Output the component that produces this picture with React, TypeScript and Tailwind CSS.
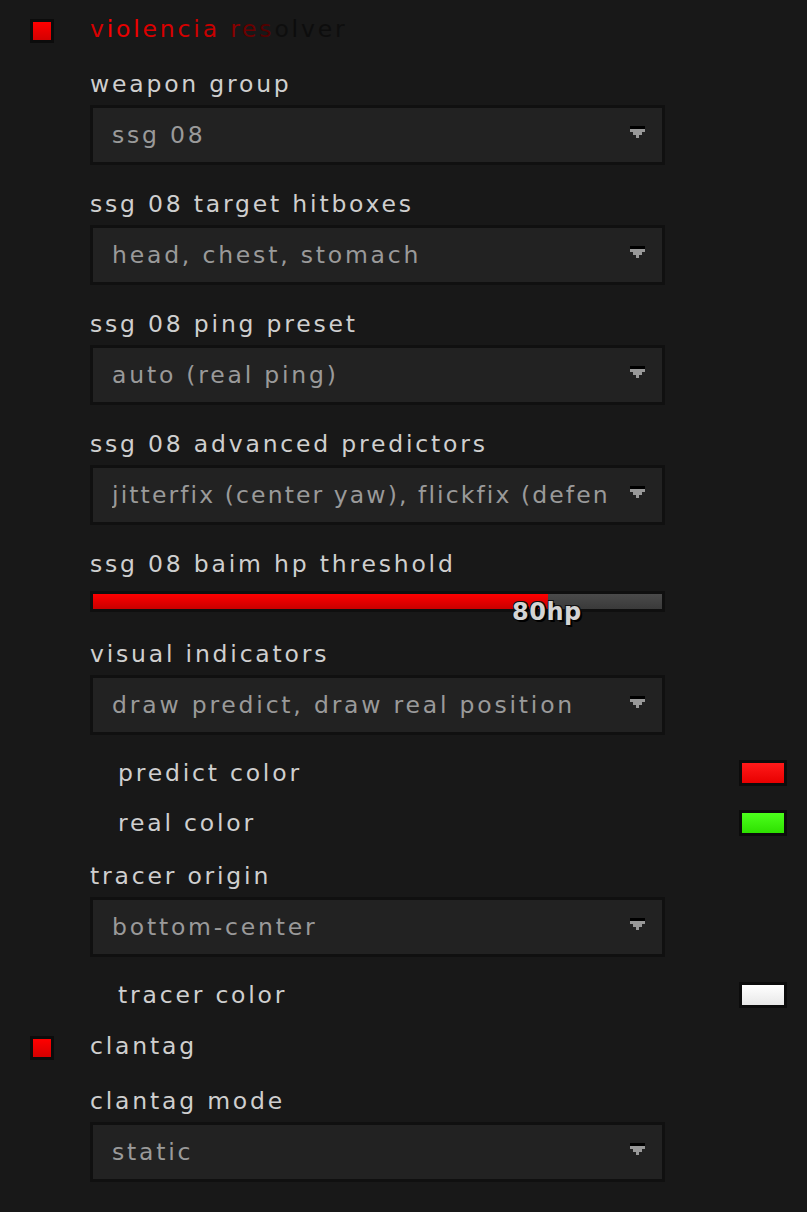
import React from 'react'

const font = { fontFamily: '"DejaVu Sans", Verdana, sans-serif' }

const titleChars: [string, string][] = [
  ['v', '#d80000'], ['i', '#ff0000'], ['o', '#e80000'], ['l', '#f00000'], ['e', '#dc0000'],
  ['n', '#d80000'], ['c', '#d40000'], ['i', '#cc0000'], ['a', '#c80000'], [' ', '#000'],
  ['r', '#880000'], ['e', '#6a0000'], ['s', '#520000'], ['o', '#0e0e0e'], ['l', '#0c0c0c'],
  ['v', '#0d0d0d'], ['e', '#0d0d0d'], ['r', '#0e0e0e'],
]

function Checkbox() {
  return (
    <div className="w-6 h-6 bg-[#0c0c0c] p-[3px]">
      <div className="w-full h-full bg-gradient-to-b from-[#ff0000] to-[#d40000]" />
    </div>
  )
}

function Label({ children, className = '' }: { children: React.ReactNode; className?: string }) {
  return (
    <div className={`h-[44px] flex items-center pt-[3px] text-[23.5px] tracking-[2.8px] text-[#cfcfcf] ${className}`}>
      {children}
    </div>
  )
}

function Arrow() {
  return (
    <div className="flex flex-col items-center">
      <div className="w-[15px] h-[3px] bg-black" />
      <div className="w-[15px] h-[3px] bg-[#999]" />
      <div className="w-[9px] h-[3px] bg-[#999]" />
      <div className="w-[3px] h-[3px] bg-[#999]" />
    </div>
  )
}

function Dropdown({ value, tight = false }: { value: string; tight?: boolean }) {
  return (
    <div className="w-[575px] h-[60px] border-[3px] border-[#101010] bg-[#222222] flex items-center pl-[19px] pr-[17px]">
      <span
        className={`flex-1 whitespace-nowrap overflow-hidden text-[23.5px] text-[#9a9a9a] pt-[1px] ${
          tight ? 'tracking-[2.1px]' : 'tracking-[2.8px]'
        }`}
      >
        {value}
      </span>
      <div className="ml-3 -mt-[6px]">
        <Arrow />
      </div>
    </div>
  )
}

function Swatch({ from, to }: { from: string; to: string }) {
  return (
    <div className="w-[48px] h-[26px] bg-[#0c0c0c] p-[3px]">
      <div className="w-full h-full" style={{ background: `linear-gradient(${from}, ${to})` }} />
    </div>
  )
}

function ColorRow({ label, from, to }: { label: string; from: string; to: string }) {
  return (
    <div className="h-[50px] flex items-center justify-between pl-[118px] pr-[20px]">
      <span className="text-[23.5px] tracking-[2.8px] text-[#cfcfcf] pt-[1px]">{label}</span>
      <Swatch from={from} to={to} />
    </div>
  )
}

export default function App() {
  return (
    <div className="w-[807px] h-[1212px] bg-[#181818] overflow-hidden" style={font}>
      {/* resolver toggle */}
      <div className="h-[61px] flex items-center pl-[30px]">
        <Checkbox />
        <span className="ml-[36px] text-[23.5px] tracking-[2.8px] pb-[2px]">
          {titleChars.map(([c, col], i) => (
            <span key={i} style={{ color: col }}>{c}</span>
          ))}
        </span>
      </div>

      <div className="pl-[90px]">
        <Label>weapon group</Label>
        <Dropdown value="ssg 08" />
        <Label className="mt-4">ssg 08 target hitboxes</Label>
        <Dropdown value="head, chest, stomach" />
        <Label className="mt-4">ssg 08 ping preset</Label>
        <Dropdown value="auto (real ping)" />
        <Label className="mt-4">ssg 08 advanced predictors</Label>
        <Dropdown value="jitterfix (center yaw), flickfix (defen" tight />
        <Label className="mt-4">ssg 08 baim hp threshold</Label>

        {/* slider */}
        <div className="relative mt-[6px] w-[575px] h-[21px] bg-[#0f0f0f] p-[3px]">
          <div className="flex w-full h-full">
            <div className="h-full w-[80%] bg-gradient-to-b from-[#ff0000] to-[#c80000]" />
            <div className="h-full flex-1 bg-gradient-to-b from-[#4a4a4a] to-[#3a3a3a]" />
          </div>
          <span
            className="absolute left-[422px] top-[3px] text-[24px] font-bold text-[#d4d4d4] tracking-[0.5px]"
            style={{ textShadow: '2px 2px 0 #000, -1px -1px 0 #111, 1px -1px 0 #111, -1px 1px 0 #111' }}
          >
            80hp
          </span>
        </div>

        <Label className="mt-[19px]">visual indicators</Label>
        <Dropdown value="draw predict, draw real position" />
      </div>

      <div className="mt-[13px]">
        <ColorRow label="predict color" from="#ff1a1a" to="#e80000" />
        <ColorRow label="real color" from="#4cff1c" to="#2ee000" />
      </div>

      <div className="pl-[90px] mt-[5px]">
        <Label>tracer origin</Label>
        <Dropdown value="bottom-center" />
      </div>

      <div className="mt-[13px]">
        <ColorRow label="tracer color" from="#ffffff" to="#e8e8e8" />
      </div>

      {/* clantag toggle */}
      <div className="h-[55px] flex items-center pl-[30px]">
        <Checkbox />
        <span className="ml-[36px] text-[23.5px] tracking-[2.8px] text-[#cfcfcf] pb-[2px]">clantag</span>
      </div>

      <div className="pl-[90px] mt-[3px]">
        <Label>clantag mode</Label>
        <Dropdown value="static" />
      </div>
    </div>
  )
}
